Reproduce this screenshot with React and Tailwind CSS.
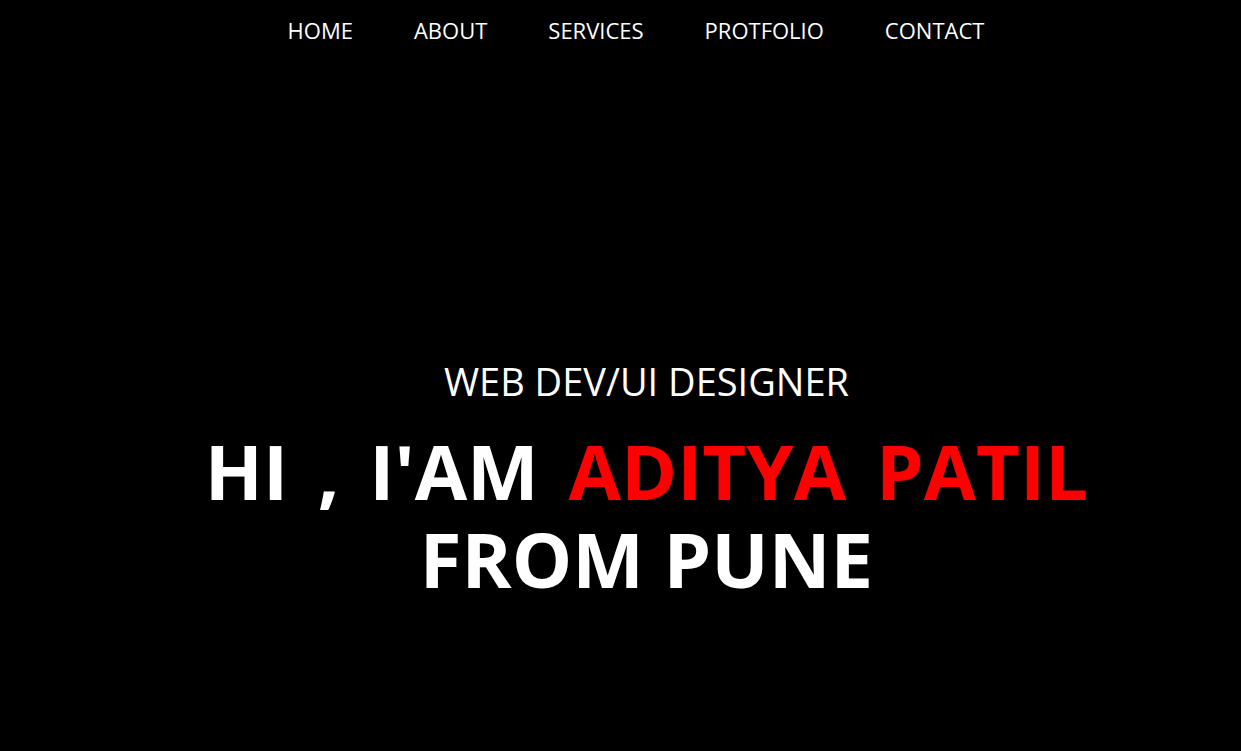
export default function App() {
  const links = ["HOME", "ABOUT", "SERVICES", "PROTFOLIO", "CONTACT"];

  return (
    <div
      className="h-[751px] w-full overflow-hidden bg-black text-white"
      style={{ fontFamily: '"Open Sans", "Noto Sans", sans-serif' }}
    >
      {/* Top navigation */}
      <nav className="flex justify-center pl-[31px] pt-[14px]">
        <ul className="flex gap-[61px]">
          {links.map((link) => (
            <li key={link}>
              <a href="#" className="text-[22px] leading-[32px] text-white">
                {link}
              </a>
            </li>
          ))}
        </ul>
      </nav>

      {/* Hero */}
      <section className="flex flex-col items-center pl-[52px] pt-[313px]">
        <h3 className="text-[38px] leading-[44px]">WEB DEV/UI DESIGNER</h3>
        <h1 className="mt-[24px] text-center text-[76px] font-bold leading-[88px]">
          <span className="[word-spacing:10px]">
            HI , I'AM <span className="text-[#ff0000]">ADITYA PATIL</span>
          </span>
          <br />
          FROM PUNE
        </h1>
      </section>
    </div>
  );
}
